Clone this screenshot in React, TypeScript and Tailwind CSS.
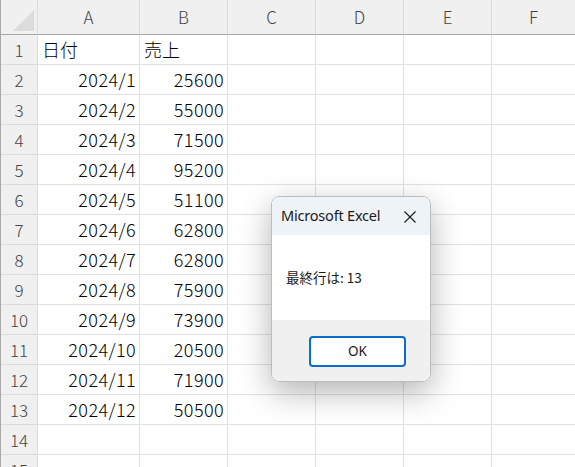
import React from "react";

const rows: [string, string][] = [
  ["日付", "売上"],
  ["2024/1", "25600"],
  ["2024/2", "55000"],
  ["2024/3", "71500"],
  ["2024/4", "95200"],
  ["2024/5", "51100"],
  ["2024/6", "62800"],
  ["2024/7", "62800"],
  ["2024/8", "75900"],
  ["2024/9", "73900"],
  ["2024/10", "20500"],
  ["2024/11", "71900"],
  ["2024/12", "50500"],
  ["", ""],
  ["", ""],
];

const cols = ["A", "B", "C", "D", "E", "F"];

const cellFont = { fontFamily: '"Noto Sans CJK JP", "Noto Sans", sans-serif' };
const uiFont = { fontFamily: '"Noto Sans", "Noto Sans CJK JP", sans-serif' };

function MsgBox() {
  return (
    <div
      className="absolute left-[270px] top-[196px] w-[160px] h-[186px] rounded-[8px] border border-[#bdbdbd] overflow-hidden flex flex-col shadow-[0_10px_32px_rgba(0,0,0,0.3)]"
      style={uiFont}
    >
      {/* title bar */}
      <div className="h-[38px] bg-[#eef3f8] flex items-center justify-between pl-[9px] pr-[14px]">
        <span className="text-[14.5px] text-[#1a1a1a] tracking-[-0.2px]">Microsoft Excel</span>
        <svg width="12" height="12" viewBox="0 0 12 12" className="mt-[1px]">
          <path d="M0.5 0.5L11.5 11.5M11.5 0.5L0.5 11.5" stroke="#1a1a1a" strokeWidth="1.1" />
        </svg>
      </div>
      {/* body */}
      <div className="h-[85px] bg-white flex items-center pl-[14px]" style={cellFont}>
        <span className="text-[13.5px] text-[#1a1a1a]">最終行は: 13</span>
      </div>
      {/* footer */}
      <div className="flex-1 bg-[#f0f0f0] pl-[37px] pt-[16px]">
        <div className="w-[97px] h-[31px] rounded-[4px] border-2 border-[#0a6ccf] bg-white flex items-center justify-center">
          <span className="text-[13.5px] text-[#1a1a1a]">OK</span>
        </div>
      </div>
    </div>
  );
}

export default function App() {
  return (
    <div className="relative w-[575px] h-[467px] overflow-hidden bg-white border-l border-[#a8a8a8]" style={cellFont}>
      <div className="grid grid-cols-[37px_102px_88px_88px_88px_88px_84px]">
        {/* corner */}
        <div className="h-[35px] bg-[#f0f0f0] border-r border-[#dcdcdc] border-b border-b-[#a6a6a6] relative">
          <div
            className="absolute left-[12px] top-[10px] w-[21px] h-[21px] bg-[#dcdcdc]"
            style={{ clipPath: "polygon(100% 0, 100% 100%, 0 100%)" }}
          />
        </div>
        {cols.map((c) => (
          <div
            key={c}
            className="h-[35px] bg-[#f0f0f0] border-r border-[#dcdcdc] border-b border-b-[#a6a6a6] flex items-center justify-center text-[17px] font-light text-[#444]"
          >
            {c}
          </div>
        ))}

        {rows.map(([a, b], i) => (
          <React.Fragment key={i}>
            <div className="h-[30px] bg-[#f0f0f0] border-r border-b border-[#dcdcdc] flex items-center justify-center text-[17px] font-light text-[#444]">
              {i + 1}
            </div>
            <div
              className={`h-[30px] border-r border-b border-[#e1e1e1] flex items-center text-[18px] font-light text-black ${
                i === 0 ? "justify-start pl-[4px]" : "justify-end pr-[3px] tracking-[0.4px]"
              }`}
            >
              {a}
            </div>
            <div
              className={`h-[30px] border-r border-b border-[#e1e1e1] flex items-center text-[18px] font-light text-black ${
                i === 0 ? "justify-start pl-[4px]" : "justify-end pr-[3px] tracking-[0.4px]"
              }`}
            >
              {b}
            </div>
            <div className="h-[30px] border-r border-b border-[#e1e1e1]" />
            <div className="h-[30px] border-r border-b border-[#e1e1e1]" />
            <div className="h-[30px] border-r border-b border-[#e1e1e1]" />
            <div className="h-[30px] border-b border-[#e1e1e1]" />
          </React.Fragment>
        ))}
      </div>
      <MsgBox />
    </div>
  );
}
